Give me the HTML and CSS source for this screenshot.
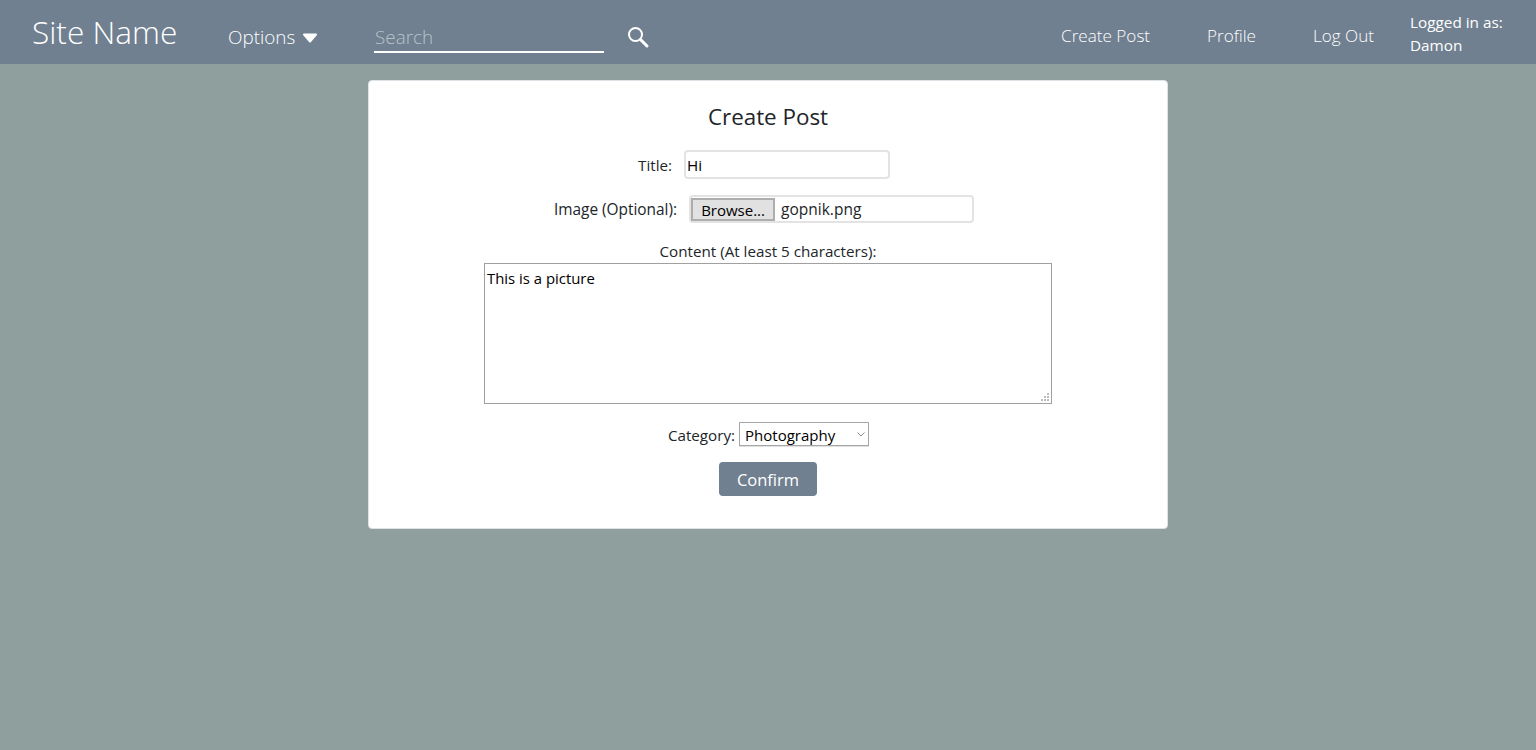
FILE: index.html
```html
<!DOCTYPE html>
<html lang="en">
<head>
  <meta charset="UTF-8" />
  <title>Create Post</title>
  <link rel="stylesheet" href="styles.css">
</head>
<body>
  <header class="navbar">
    <a class="brand" href="#">Site Name</a>
    <a class="options" href="#">Options
      <svg class="caret" width="16" height="10" viewBox="0 0 16 10">
        <path d="M2 1.5 H14 L8 8.5 Z" fill="#fff" stroke="#fff" stroke-width="2" stroke-linejoin="round" />
      </svg>
    </a>
    <form class="search">
      <input class="search-input" type="text" placeholder="Search" />
      <svg class="search-icon" width="24" height="24" viewBox="0 0 24 24">
        <circle cx="9.5" cy="9.5" r="6.5" fill="none" stroke="#fff" stroke-width="2" />
        <path d="M14.5 14.5 L21 21" stroke="#fff" stroke-width="3" stroke-linecap="round" />
      </svg>
    </form>
    <nav class="nav-links">
      <a href="#">Create Post</a>
      <a href="#">Profile</a>
      <a href="#">Log Out</a>
    </nav>
    <div class="user">Logged in as:<br>Damon</div>
  </header>

  <main class="card">
    <h2>Create Post</h2>
    <form class="post-form">
      <div class="row row-title">
        <label for="title">Title:</label>
        <input id="title" class="title-input" type="text" value="Hi" />
      </div>
      <div class="row row-image">
        <label>Image (Optional):</label>
        <div class="file-box">
          <button type="button" class="browse">Browse...</button>
          <span class="file-name">gopnik.png</span>
        </div>
      </div>
      <label class="content-label" for="content">Content (At least 5 characters):</label>
      <div class="textarea-wrap">
        <textarea id="content">This is a picture</textarea>
        <svg class="grip" width="9" height="9" viewBox="0 0 9 9">
          <rect x="6" y="0" width="2" height="2" />
          <rect x="3" y="3" width="2" height="2" />
          <rect x="6" y="3" width="2" height="2" />
          <rect x="0" y="6" width="2" height="2" />
          <rect x="3" y="6" width="2" height="2" />
          <rect x="6" y="6" width="2" height="2" />
        </svg>
      </div>
      <div class="row row-category">
        <label for="category">Category:</label>
        <div class="select-wrap">
          <select id="category">
            <option>Photography</option>
          </select>
          <svg class="chevron" width="8" height="5" viewBox="0 0 8 5">
            <path d="M0.5 0.5 L4 4 L7.5 0.5" fill="none" stroke="#8a8a8a" />
          </svg>
        </div>
      </div>
      <button type="submit" class="confirm">Confirm</button>
    </form>
  </main>
</body>
</html>
```

FILE: styles.css
```css
* {
  box-sizing: border-box;
}
body {
  margin: 0;
  background: #8f9f9e;
  font-family: "Open Sans", "Noto Sans", sans-serif;
  color: #212529;
  font-size: 15.2px;
}
a {
  color: #fff;
  text-decoration: none;
}
.navbar {
  display: flex;
  align-items: center;
  height: 64px;
  padding: 0 32px;
  background: #708090;
  color: #fff;
}
.brand {
  width: 196px;
  font-size: 31.6px;
  font-weight: 300;
  margin-top: -2px;
}
.options {
  display: flex;
  align-items: center;
  gap: 7px;
  width: 146px;
  font-size: 18.9px;
  font-weight: 300;
  margin-top: 10px;
}
.caret {
  margin-top: 2px;
}
.search {
  display: flex;
  align-items: center;
  margin-top: 8px;
}
.search-input {
  width: 230px;
  height: 32px;
  padding: 2px 1px 0;
  margin-top: 2px;
  background: transparent;
  border: none;
  border-bottom: 2px solid #fff;
  outline: none;
  color: #fff;
  font: 300 18.9px "Open Sans", sans-serif;
}
.search-input::placeholder {
  color: #b9c2cb;
}
.search-icon {
  margin-left: 22px;
  margin-top: 2px;
}
.nav-links {
  display: flex;
  gap: 57px;
  margin-left: auto;
  margin-top: 7px;
  font-size: 17.1px;
  font-weight: 300;
}
.user {
  width: 94px;
  margin-left: 36px;
  font-size: 15.3px;
  line-height: 23px;
  margin-top: 4px;
  white-space: nowrap;
}
.card {
  width: 800px;
  height: 449px;
  margin: 16px auto 0;
  padding: 21px 0 0;
  background: #fff;
  border: 1px solid #dee2e6;
  border-radius: 4px;
  text-align: center;
}
h2 {
  margin: 0;
  font-size: 22.4px;
  font-weight: 400;
  line-height: 30px;
}
.post-form {
  display: flex;
  flex-direction: column;
  align-items: center;
}
.row {
  display: flex;
  align-items: center;
  justify-content: center;
}
.row-title {
  gap: 12px;
  margin: 18px 8px 0 0;
}
.title-input {
  width: 206px;
  height: 29px;
  padding: 1px 1px 0;
  border: 2px solid #e3e3e3;
  border-radius: 4px;
  outline: none;
  font: 15.2px "Open Sans", sans-serif;
  color: #000;
}
.row-image {
  gap: 12px;
  margin: 16px 8px 0 0;
  font-size: 15.4px;
}
.file-box {
  display: flex;
  align-items: center;
  width: 285px;
  height: 28px;
  padding: 0;
  border: 2px solid #e3e3e3;
  border-radius: 4px;
}
.browse {
  width: 84px;
  height: 23px;
  padding: 0 0 3px;
  background: #e1e1e1;
  border: 2px solid #adadad;
  color: #000;
  font: 15px "Open Sans", sans-serif;
}
.file-name {
  margin-left: 6px;
  font-size: 15.5px;
}
.content-label {
  margin-top: 18px;
  line-height: 20px;
}
.textarea-wrap {
  position: relative;
  margin-top: 2px;
}
textarea {
  display: block;
  width: 568px;
  height: 141px;
  padding: 4px 2px;
  border: 1px solid #a0a0a0;
  outline: none;
  resize: none;
  color: #000;
  font: 14.9px/21px "Open Sans", sans-serif;
}
.grip {
  position: absolute;
  right: 2px;
  bottom: 2px;
  fill: #bdbdbd;
}
.row-category {
  gap: 4px;
  margin: 18px 0 0 1px;
}
.select-wrap {
  position: relative;
  margin-bottom: 1px;
}
select {
  display: block;
  width: 130px;
  height: 24px;
  padding: 1px 5px 0;
  appearance: none;
  background: #fff;
  border: 1px solid #a6a6a6;
  border-radius: 0;
  box-shadow: 0 1px 0 #e0e0e0;
  color: #000;
  font: 15px "Open Sans", sans-serif;
}
.chevron {
  position: absolute;
  right: 4px;
  top: 10px;
}
.confirm {
  width: 98px;
  height: 34px;
  margin-top: 15px;
  background: #708090;
  border: none;
  border-radius: 4px;
  color: #fff;
  font: 16.5px "Open Sans", sans-serif;
}
```
